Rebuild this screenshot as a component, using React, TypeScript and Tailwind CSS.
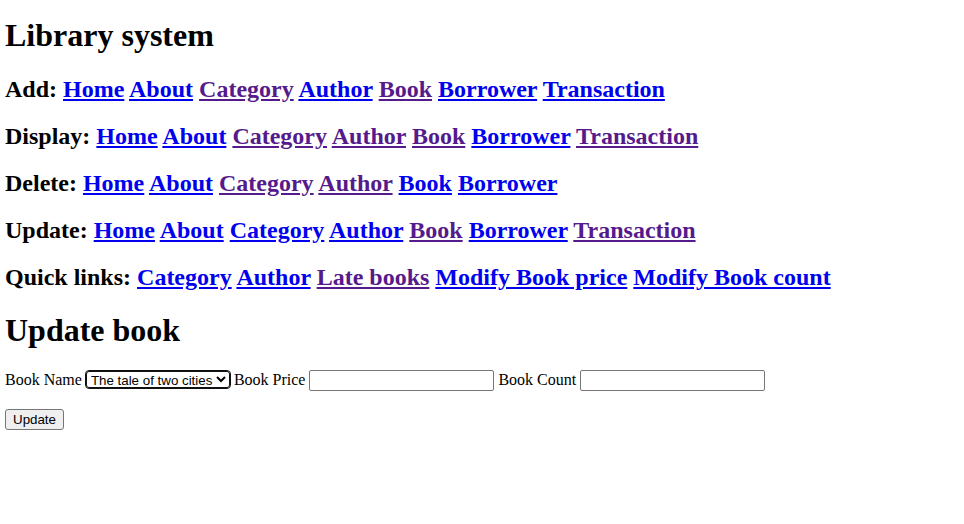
import React from "react";

type NavLink = { label: string; visited?: boolean };

const rows: { title: string; links: NavLink[] }[] = [
  {
    title: "Add:",
    links: [
      { label: "Home" },
      { label: "About" },
      { label: "Category", visited: true },
      { label: "Author" },
      { label: "Book", visited: true },
      { label: "Borrower" },
      { label: "Transaction" },
    ],
  },
  {
    title: "Display:",
    links: [
      { label: "Home" },
      { label: "About" },
      { label: "Category", visited: true },
      { label: "Author", visited: true },
      { label: "Book", visited: true },
      { label: "Borrower" },
      { label: "Transaction", visited: true },
    ],
  },
  {
    title: "Delete:",
    links: [
      { label: "Home" },
      { label: "About" },
      { label: "Category", visited: true },
      { label: "Author", visited: true },
      { label: "Book" },
      { label: "Borrower" },
    ],
  },
  {
    title: "Update:",
    links: [
      { label: "Home" },
      { label: "About" },
      { label: "Category" },
      { label: "Author" },
      { label: "Book", visited: true },
      { label: "Borrower" },
      { label: "Transaction", visited: true },
    ],
  },
  {
    title: "Quick links:",
    links: [
      { label: "Category" },
      { label: "Author" },
      { label: "Late books", visited: true },
      { label: "Modify Book price" },
      { label: "Modify Book count" },
    ],
  },
];

export default function App() {
  return (
    <div className="min-h-screen bg-white px-[5px] pt-[17px] text-black font-['Liberation_Serif',serif] text-[16px]">
      <h1 className="text-[32px] font-bold leading-[normal] mb-[21.8px]">Library system</h1>

      {rows.map((row) => (
        <h2 key={row.title} className="text-[24px] font-bold leading-[normal] my-[20px]">
          {row.title}
          {row.links.map((l, i) => (
            <React.Fragment key={i}>
              {" "}
              <a
                href="#"
                className={`underline ${l.visited ? "text-[#551a8b]" : "text-[#0000ee]"}`}
              >
                {l.label}
              </a>
            </React.Fragment>
          ))}
        </h2>
      ))}

      <h1 className="text-[32px] font-bold leading-[normal] mt-[21px] mb-[21.5px]">Update book</h1>

      <form onSubmit={(e) => e.preventDefault()}>
        <div className="leading-[normal]">
          Book Name{" "}
          <select className="h-[17px] border border-[#111] outline outline-1 outline-[#111] rounded-[3px] bg-white text-[13.333px] font-['Liberation_Sans',sans-serif] align-baseline">
            <option>The tale of two cities</option>
          </select>{" "}
          Book Price{" "}
          <input
            type="text"
            className="h-[21px] w-[185px] border border-[#767676] rounded-[2px] px-[2px] py-[1px] leading-[normal] text-[13.333px] font-['Liberation_Sans',sans-serif] align-baseline"
          />{" "}
          Book Count{" "}
          <input
            type="text"
            className="h-[21px] w-[185px] border border-[#767676] rounded-[2px] px-[2px] py-[1px] leading-[normal] text-[13.333px] font-['Liberation_Sans',sans-serif] align-baseline"
          />
        </div>
        <div className="mt-[16px]">
          <button
            type="submit"
            className="h-[21px] w-[59px] border border-[#767676] rounded-[3px] bg-[#efefef] text-[13.333px] font-['Liberation_Sans',sans-serif] leading-none"
          >
            Update
          </button>
        </div>
      </form>
    </div>
  );
}
